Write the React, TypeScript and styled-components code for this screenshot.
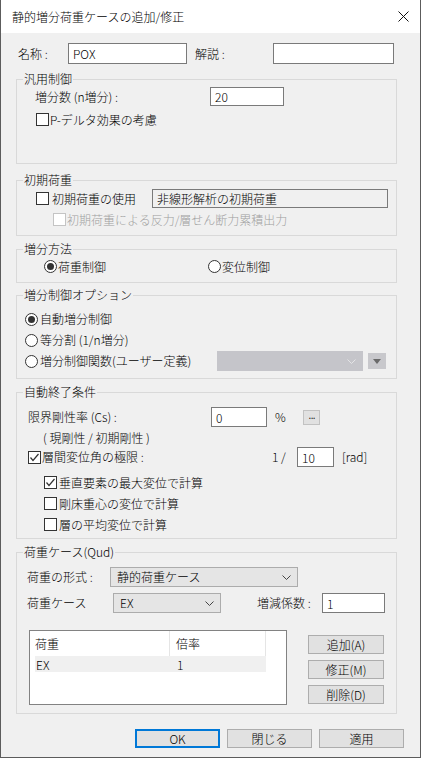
import React from "react";
import styled, { createGlobalStyle } from "styled-components";

const GlobalStyle = createGlobalStyle`
  html, body { margin: 0; padding: 0; background: #ffffff; }
  body {
    font-family: "Noto Sans CJK JP", "Noto Sans", sans-serif;
    font-size: 12px;
    font-weight: 300;
    color: #000;
  }
  * { box-sizing: border-box; }
`;

const Window = styled.div`
  width: 421px;
  height: 758px;
  border: 1px solid #5c5c5c;
  border-top: none;
  background: #f0f0f0;
  display: flex;
  flex-direction: column;
`;

const TitleBar = styled.div`
  height: 33px;
  flex: none;
  background: #ffffff;
  display: flex;
  align-items: center;
  justify-content: space-between;
  padding: 0 11px 0 11px;
`;

const Title = styled.span`
  font-size: 12px;
  line-height: 14px;
  color: #000;
`;

const Body = styled.div`
  flex: 1;
  padding: 10px 0 0 15px;
`;

const Row = styled.div<{ $mt?: number; $h?: number; $pl?: number }>`
  display: flex;
  align-items: center;
  margin-top: ${(p) => p.$mt ?? 0}px;
  height: ${(p) => p.$h ?? 13}px;
  padding-left: ${(p) => p.$pl ?? 0}px;
  white-space: nowrap;
  line-height: 14px;
`;

const Cell = styled.span<{ $w: number }>`
  flex: none;
  width: ${(p) => p.$w}px;
  display: flex;
  align-items: center;
`;

const Text = styled.span<{ $disabled?: boolean; $ml?: number }>`
  margin-left: ${(p) => p.$ml ?? 0}px;
  color: ${(p) => (p.$disabled ? "#a0a0a0" : "#000")};
  line-height: 14px;
`;

const TextBox = styled.input<{ $w: number; $h?: number; $gray?: boolean }>`
  flex: none;
  width: ${(p) => p.$w}px;
  height: ${(p) => p.$h ?? 20}px;
  margin: 0;
  padding: 0 0 0 4px;
  border: 1px solid #7a7a7a;
  background: ${(p) => (p.$gray ? "#f0f0f0" : "#ffffff")};
  font: inherit;
  font-size: 12px;
  color: #000;
  outline: none;
`;

const Group = styled.fieldset<{ $mt: number; $h: number }>`
  margin: ${(p) => p.$mt}px 0 0 0;
  padding: 0;
  width: 381px;
  height: ${(p) => p.$h}px;
  min-width: 0;
  border: 1px solid #d9d9d9;
`;

const Legend = styled.legend`
  margin-left: 6px;
  padding: 0 1px;
  font-size: 12px;
  line-height: 14px;
  height: 14px;
`;

const CheckBox = styled.span<{ $disabled?: boolean }>`
  flex: none;
  width: 13px;
  height: 13px;
  border: 1px solid ${(p) => (p.$disabled ? "#c4c4c4" : "#333333")};
  background: #ffffff;
  display: inline-flex;
  align-items: center;
  justify-content: center;
`;

const RadioCircle = styled.span`
  flex: none;
  width: 13px;
  height: 13px;
  border: 1px solid #333333;
  border-radius: 50%;
  background: #ffffff;
  display: inline-flex;
  align-items: center;
  justify-content: center;
`;

const RadioDot = styled.span`
  width: 7px;
  height: 7px;
  border-radius: 50%;
  background: #333333;
`;

const Combo = styled.div<{ $w: number; $disabled?: boolean }>`
  flex: none;
  width: ${(p) => p.$w}px;
  height: 20px;
  border: 1px solid ${(p) => (p.$disabled ? "#c5c5ca" : "#acacac")};
  background: ${(p) => (p.$disabled ? "#c5c5ca" : "#e5e5e5")};
  display: flex;
  align-items: center;
  justify-content: space-between;
  padding: 0 6px 0 6px;
  font-size: 12px;
`;

const DropBtn = styled.div`
  flex: none;
  width: 18px;
  height: 16px;
  margin-left: 5px;
  background: #c8c8cc;
  display: flex;
  align-items: center;
  justify-content: center;
`;

const Btn = styled.button<{ $w: number; $h?: number; $primary?: boolean }>`
  flex: none;
  width: ${(p) => p.$w}px;
  height: ${(p) => p.$h ?? 19}px;
  margin: 0;
  padding: 0;
  background: #e1e1e1;
  border: ${(p) => (p.$primary ? "2px solid #0078d7" : "1px solid #adadad")};
  font: inherit;
  font-size: 12px;
  line-height: 14px;
  color: #000;
`;

const DotsBtn = styled.button`
  flex: none;
  width: 17px;
  height: 15px;
  margin: 0;
  padding: 0 0 3px 0;
  background: #e1e1e1;
  border: 1px solid #c2c2c2;
  font-family: "DejaVu Sans", sans-serif;
  font-size: 10px;
  line-height: 10px;
  letter-spacing: -1px;
  color: #222;
`;

const ListBox = styled.div`
  flex: none;
  width: 258px;
  height: 75px;
  border: 1px solid #828282;
  background: #ffffff;
`;

const ListHeader = styled.div`
  display: flex;
  height: 25px;
`;

const HeadCell = styled.div<{ $w: number; $pl: number }>`
  flex: none;
  width: ${(p) => p.$w}px;
  padding-left: ${(p) => p.$pl}px;
  border-right: 1px solid #e5e5e5;
  display: flex;
  align-items: center;
`;

const DataRow = styled.div`
  display: flex;
  margin-left: 5px;
  width: 231px;
  height: 16px;
  background: #f0f0f0;
  align-items: center;
`;

const DataCell = styled.div<{ $w: number; $pl: number }>`
  flex: none;
  width: ${(p) => p.$w}px;
  padding-left: ${(p) => p.$pl}px;
`;

const SideButtons = styled.div`
  display: flex;
  flex-direction: column;
  gap: 6px;
  padding-top: 5px;
  margin-left: 21px;
  align-self: flex-start;
`;

const ListRow = styled.div<{ $mt: number }>`
  display: flex;
  margin-top: ${(p) => p.$mt}px;
  padding-left: 12px;
`;

const Footer = styled.div`
  display: flex;
  gap: 7px;
  margin-top: 15px;
  padding-left: 119px;
`;

const Chevron = ({ color = "#444" }: { color?: string }) => (
  <svg width="9" height="5" viewBox="0 0 9 5">
    <polyline points="0.5,0.5 4.5,4.5 8.5,0.5" fill="none" stroke={color} strokeWidth="1" />
  </svg>
);

const Check = ({ checked, disabled }: { checked?: boolean; disabled?: boolean }) => (
  <CheckBox $disabled={disabled}>
    {checked && (
      <svg width="11" height="11" viewBox="0 0 11 11">
        <polyline points="1.5,5.5 4,8.5 9.5,2" fill="none" stroke="#333" strokeWidth="1.2" />
      </svg>
    )}
  </CheckBox>
);

const Radio = ({ checked }: { checked?: boolean }) => (
  <RadioCircle>{checked && <RadioDot />}</RadioCircle>
);

export default function App() {
  return (
    <>
      <GlobalStyle />
      <Window>
        <TitleBar>
          <Title>静的増分荷重ケースの追加/修正</Title>
          <svg width="11" height="11" viewBox="0 0 11 11">
            <line x1="0.5" y1="0.5" x2="10.5" y2="10.5" stroke="#111" strokeWidth="1" />
            <line x1="10.5" y1="0.5" x2="0.5" y2="10.5" stroke="#111" strokeWidth="1" />
          </svg>
        </TitleBar>
        <Body>
          <Row $h={21} $pl={2}>
            <Cell $w={50}>名称 :</Cell>
            <TextBox $w={119} $h={21} readOnly value="POX" />
            <Cell $w={78} style={{ marginLeft: 8 }}>解説 :</Cell>
            <TextBox $w={121} $h={21} readOnly value="" />
          </Row>

          <Group $mt={8} $h={92}>
            <Legend>汎用制御</Legend>
            <Row $mt={1} $h={19} $pl={18}>
              <Cell $w={175}>増分数 (n増分) :</Cell>
              <TextBox $w={74} $h={19} readOnly value="20" />
            </Row>
            <Row $mt={7} $pl={19}>
              <Check />
              <Text $ml={1}>P-デルタ効果の考慮</Text>
            </Row>
          </Group>

          <Group $mt={9} $h={63}>
            <Legend>初期荷重</Legend>
            <Row $mt={2} $h={19} $pl={19}>
              <Cell $w={116}>
                <Check />
                <Text $ml={3}>初期荷重の使用</Text>
              </Cell>
              <TextBox $w={236} $h={19} $gray readOnly value="非線形解析の初期荷重" />
            </Row>
            <Row $mt={5} $pl={36}>
              <Check disabled />
              <Text $ml={1} $disabled>初期荷重による反力/層せん断力累積出力</Text>
            </Row>
          </Group>

          <Group $mt={6} $h={41}>
            <Legend>増分方法</Legend>
            <Row $mt={4} $pl={27}>
              <Cell $w={164}>
                <Radio checked />
                <Text $ml={1}>荷重制御</Text>
              </Cell>
              <Radio />
              <Text $ml={1}>変位制御</Text>
            </Row>
          </Group>

          <Group $mt={5} $h={91}>
            <Legend>増分制御オプション</Legend>
            <Row $mt={7} $h={20} $pl={8}>
              <Radio checked />
              <Text $ml={2}>自動増分制御</Text>
            </Row>
            <Row $mt={1} $h={20} $pl={8}>
              <Radio />
              <Text $ml={2}>等分割 (1/n増分)</Text>
            </Row>
            <Row $mt={1} $h={20} $pl={8}>
              <Cell $w={192}>
                <Radio />
                <Text $ml={2}>増分制御関数(ユーザー定義)</Text>
              </Cell>
              <Combo $w={146} $disabled>
                <span />
                <Chevron color="#e4e4e6" />
              </Combo>
              <DropBtn>
                <svg width="8" height="5" viewBox="0 0 8 5">
                  <polygon points="0,0 8,0 4,5" fill="#6a6a6a" />
                </svg>
              </DropBtn>
            </Row>
          </Group>

          <Group $mt={6} $h={154}>
            <Legend>自動終了条件</Legend>
            <Row $mt={8} $h={20} $pl={11}>
              <Cell $w={183}>限界剛性率 (Cs) :</Cell>
              <TextBox $w={56} $h={20} readOnly value="0" />
              <Cell $w={28} style={{ marginLeft: 8 }}>%</Cell>
              <DotsBtn>...</DotsBtn>
            </Row>
            <Row $mt={4} $h={14} $pl={26}>
              <Text>( 現剛性 / 初期剛性 )</Text>
            </Row>
            <Row $mt={2} $h={20} $pl={11}>
              <Cell $w={244}>
                <Check checked />
                <Text $ml={1}>層間変位角の極限 :</Text>
              </Cell>
              <Cell $w={25}>1 /</Cell>
              <TextBox $w={37} $h={20} readOnly value="10" />
              <Text $ml={8}>[rad]</Text>
            </Row>
            <Row $mt={9} $pl={27}>
              <Check checked />
              <Text $ml={2}>垂直要素の最大変位で計算</Text>
            </Row>
            <Row $mt={8} $pl={27}>
              <Check />
              <Text $ml={2}>剛床重心の変位で計算</Text>
            </Row>
            <Row $mt={8} $pl={27}>
              <Check />
              <Text $ml={2}>層の平均変位で計算</Text>
            </Row>
          </Group>

          <Group $mt={6} $h={169}>
            <Legend>荷重ケース(Qud)</Legend>
            <Row $mt={8} $h={20} $pl={10}>
              <Cell $w={83}>荷重の形式 :</Cell>
              <Combo $w={188}>
                <span>静的荷重ケース</span>
                <Chevron />
              </Combo>
            </Row>
            <Row $mt={6} $h={20} $pl={10}>
              <Cell $w={86}>荷重ケース</Cell>
              <Combo $w={108}>
                <span>EX</span>
                <Chevron />
              </Combo>
              <Cell $w={65} style={{ marginLeft: 36 }}>増減係数 :</Cell>
              <TextBox $w={63} $h={20} readOnly value="1" />
            </Row>
            <ListRow $mt={17}>
              <ListBox>
                <ListHeader>
                  <HeadCell $w={140} $pl={5}>荷重</HeadCell>
                  <HeadCell $w={96} $pl={6}>倍率</HeadCell>
                </ListHeader>
                <DataRow>
                  <DataCell $w={136} $pl={1}>EX</DataCell>
                  <DataCell $w={95} $pl={6}>1</DataCell>
                </DataRow>
              </ListBox>
              <SideButtons>
                <Btn $w={76}>追加(A)</Btn>
                <Btn $w={76}>修正(M)</Btn>
                <Btn $w={76}>削除(D)</Btn>
              </SideButtons>
            </ListRow>
          </Group>

          <Footer>
            <Btn $w={85} $primary>OK</Btn>
            <Btn $w={85}>閉じる</Btn>
            <Btn $w={85}>適用</Btn>
          </Footer>
        </Body>
      </Window>
    </>
  );
}
